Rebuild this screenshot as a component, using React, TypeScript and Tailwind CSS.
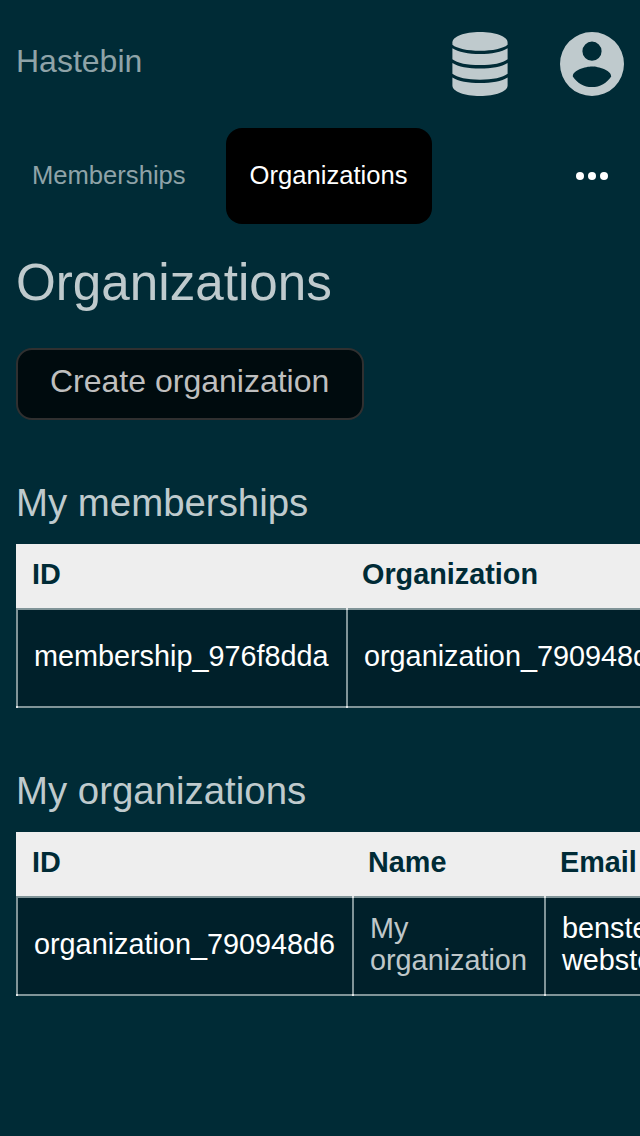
import type { ReactNode } from "react";

function DatabaseIcon() {
  return (
    <svg viewBox="0 0 56 64" className="h-16 w-14 fill-[#bfcacd]">
      <path d="M28 0C12.500 0 .4 4.600.4 10.500v2.200C5 16.600 15.500 18.700 28 18.700s23-2.100 27.600-6v-2.200C55.600 4.600 43.500 0 28 0Z" />
      <path d="M.4 16.300C6 20.200 16.500 22.100 28 22.100s22-1.900 27.600-5.800v10.900C51 31.100 40.500 33.100 28 33.100S5 31.100.4 27.200Z" />
      <path d="M.4 30.900C6 34.800 16.500 36.500 28 36.500s22-1.700 27.600-5.600v10.900C51 45.700 40.500 47.700 28 47.700S5 45.700.4 41.800Z" />
      <path d="M.4 45.500C6 49.400 16.500 51 28 51s22-1.600 27.600-5.500v8C55.600 59.400 43.500 64 28 64S.4 59.400.4 53.500Z" />
    </svg>
  );
}

function AccountIcon() {
  return (
    <svg viewBox="0 0 64 64" className="size-16 fill-[#bfcacd]">
      <path
        fillRule="evenodd"
        d="M32 0a32 32 0 1 1 0 64a32 32 0 0 1 0-64ZM32 9.600a9.600 9.600 0 1 0 0 19.200a9.600 9.600 0 0 0 0-19.200ZM12.800 44.400C16.900 50.800 24 55.040 32 55.040s15.100-4.240 19.200-10.640C51.100 38.100 38.400 34.560 32 34.560S12.900 38.100 12.800 44.400Z"
      />
    </svg>
  );
}

function Heading({ children }: { children: ReactNode }) {
  return <h2 className="text-[38.4px] leading-[48px] text-[#bfcacd] whitespace-nowrap">{children}</h2>;
}

function Th({ children }: { children: ReactNode }) {
  return (
    <th className="h-16 bg-[#eeeeee] p-0 pl-4 pb-1 text-left align-middle font-bold leading-8 text-[#002b36]">{children}</th>
  );
}

function Td({ children, className = "" }: { children: ReactNode; className?: string }) {
  return (
    <td
      className={
        "relative h-[100px] border-y-2 border-l-2 border-[#809498] bg-[#00202a] p-0 pl-4 pb-1 align-middle leading-8 whitespace-nowrap before:absolute before:-top-0.5 before:-left-0.5 before:size-0.5 before:bg-[#dfe4e5] first:before:hidden after:absolute after:-bottom-0.5 after:-left-0.5 after:size-0.5 after:bg-[#dfe4e5] " +
        className
      }
    >
      {children}
    </td>
  );
}

export default function App() {
  return (
    <div className="h-[1136px] w-[640px] overflow-hidden bg-[#002b36] font-['Liberation_Sans',Arial,sans-serif] text-white">
      <header className="flex h-32 items-center justify-between px-4">
        <span className="pb-1.5 text-[32px] text-[#8fa3a8]">Hastebin</span>
        <div className="flex items-center gap-[52px]">
          <DatabaseIcon />
          <AccountIcon />
        </div>
      </header>
      <nav className="flex h-24 items-center text-[25.6px]">
        <a className="w-[226px] pl-8 pb-0.5 text-[#8fa3a8]">Memberships</a>
        <a className="flex h-24 w-[206px] items-center rounded-2xl bg-black pl-[23.6px] pb-0.5">Organizations</a>
        <span className="ml-auto mr-8 flex gap-1">
          <i className="size-2 rounded-full bg-white" />
          <i className="size-2 rounded-full bg-white" />
          <i className="size-2 rounded-full bg-white" />
        </span>
      </nav>
      <main className="pl-4">
        <h1 className="pt-[27px] text-[51.2px] leading-[64px] text-[#bfcacd]">Organizations</h1>
        <button className="mt-[33px] flex h-[72px] w-[348px] items-center rounded-2xl border-2 border-[#303030] bg-[#000b0e] pl-8 pb-1.5 text-[32px] text-[#bfbfbf]">
          Create organization
        </button>
        <section className="mt-[59px]">
          <Heading>My memberships</Heading>
          <table className="mt-[17px] w-[780px] table-fixed border-separate border-spacing-0 text-[28.8px]">
            <colgroup><col className="w-[330px]" /><col className="w-[450px]" /></colgroup>
            <thead><tr><Th>ID</Th><Th>Organization</Th></tr></thead>
            <tbody><tr><Td>membership_976f8dda</Td><Td>organization_790948d6</Td></tr></tbody>
          </table>
        </section>
        <section className="mt-[59px]">
          <Heading>My organizations</Heading>
          <table className="mt-[17px] w-[830px] table-fixed border-separate border-spacing-0 text-[28.8px]">
            <colgroup><col className="w-[336px]" /><col className="w-[192px]" /><col className="w-[302px]" /></colgroup>
            <thead><tr><Th>ID</Th><Th>Name</Th><Th>Email</Th></tr></thead>
            <tbody>
              <tr>
                <Td>organization_790948d6</Td>
                <Td className="text-[#bfc7c9]">My<br />organization</Td>
                <Td>benster<br />webster</Td>
              </tr>
            </tbody>
          </table>
        </section>
      </main>
    </div>
  );
}
